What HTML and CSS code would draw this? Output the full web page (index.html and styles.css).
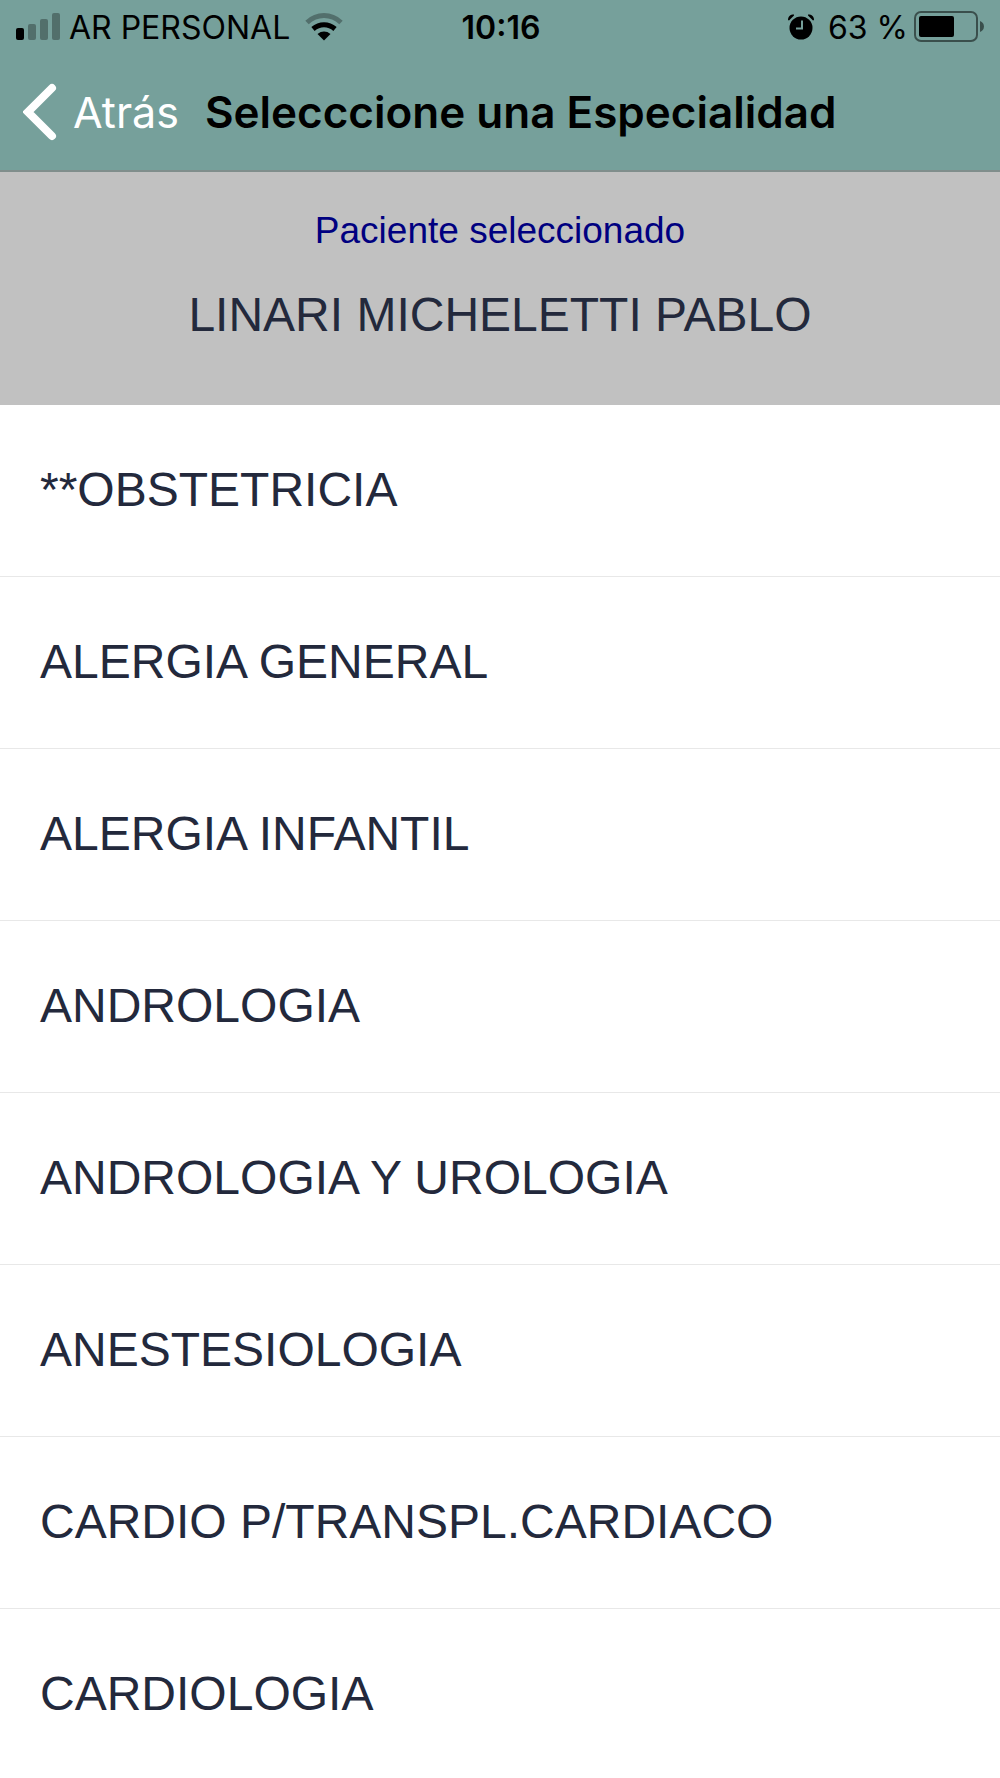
FILE: index.html
```html
<!DOCTYPE html>
<html lang="es">
<head>
    <meta charset="UTF-8">
    <meta name="viewport" content="width=device-width, initial-scale=1.0">
    <title>Seleccione una Especialidad</title>
    <link rel="stylesheet" href="styles.css">
</head>
<body>
    <header class="header">
        <div class="status-bar">
            <div class="status-left">
                <svg class="signal" width="44" height="28" viewBox="0 0 44 28" aria-hidden="true">
                    <rect x="0" y="15" width="8" height="12" rx="2"/>
                    <g opacity="0.3">
                        <rect x="12" y="11" width="8" height="16" rx="2"/>
                        <rect x="24" y="6" width="8" height="21" rx="2"/>
                        <rect x="36" y="0" width="8" height="27" rx="2"/>
                    </g>
                </svg>
                <span>AR PERSONAL</span>
                <svg class="wifi" width="38" height="28" viewBox="0 0 38 28" aria-hidden="true">
                    <g fill="none" stroke="#000" stroke-width="5">
                        <path d="M2 9.500C12 .3 26 .3 36 9.500" opacity="0.3"/>
                        <path d="M8 16C14.500 10.300 23.500 10.300 30 16"/>
                    </g>
                    <path d="M12.500 21C16.500 17.700 21.500 17.700 25.500 21L19 27.500Z"/>
                </svg>
            </div>
            <span class="time">10:16</span>
            <div class="status-right">
                <svg class="alarm" width="26" height="26" viewBox="0 0 26 26" aria-hidden="true">
                    <circle cx="13" cy="14" r="11.500"/>
                    <path d="M0 6C0 2.500 2 .5 6 .5L6 1.500L1 6.500ZM26 6C26 2.500 24 .5 20 .5L20 1.500L25 6.500Z"/>
                    <path d="M14 6.500V14.500H8" fill="none" stroke="#76a09b" stroke-width="2"/>
                </svg>
                <span>63 %</span>
                <svg class="battery" width="72" height="32" viewBox="0 0 72 32" aria-hidden="true">
                    <g opacity="0.5">
                        <rect x="1" y="1" width="62" height="29" rx="6" fill="none" stroke="#000" stroke-width="2"/>
                        <path d="M66 10C71.300 12 71.300 19 66 21Z"/>
                    </g>
                    <rect x="5" y="5" width="35" height="21" rx="2"/>
                </svg>
            </div>
        </div>
        <nav class="nav-bar">
            <button class="back-button" type="button">
                <svg width="34" height="58" viewBox="0 0 34 58" aria-hidden="true">
                    <path d="M29 5L5 29L29 53" fill="none" stroke="#fff" stroke-width="8" stroke-linecap="round" stroke-linejoin="miter"/>
                </svg>
                Atrás
            </button>
            <h1 class="title">Selecccione una Especialidad</h1>
        </nav>
    </header>

    <section class="patient">
        <p class="patient-label">Paciente seleccionado</p>
        <p class="patient-name">LINARI MICHELETTI PABLO</p>
    </section>

    <ul class="list">
        <li><a class="item" href="#">**OBSTETRICIA</a></li>
        <li><a class="item" href="#">ALERGIA GENERAL</a></li>
        <li><a class="item" href="#">ALERGIA INFANTIL</a></li>
        <li><a class="item" href="#">ANDROLOGIA</a></li>
        <li><a class="item" href="#">ANDROLOGIA Y UROLOGIA</a></li>
        <li><a class="item" href="#">ANESTESIOLOGIA</a></li>
        <li><a class="item" href="#">CARDIO P/TRANSPL.CARDIACO</a></li>
        <li><a class="item" href="#">CARDIOLOGIA</a></li>
    </ul>
</body>
</html>
```
FILE: styles.css
```css
* {
    box-sizing: border-box;
}

body {
    margin: 0;
    background-color: #fff;
    color: #23293c;
    font-family: "Liberation Sans", Arial, sans-serif;
}

/* Header */
.header {
    background-color: #76a09b;
    border-bottom: 2px solid #808e8c;
    color: #000;
    font-family: Inter, sans-serif;
}

.status-bar {
    display: grid;
    grid-template-columns: 1fr auto 1fr;
    align-items: center;
    height: 54px;
    padding: 0 14px 0 16px;
    font-size: 32px;
}

.status-left,
.status-right {
    display: flex;
    align-items: center;
}

.status-left {
    gap: 9px;
}

.status-right {
    justify-content: flex-end;
    gap: 6px;
}

.wifi {
    margin-left: 6px;
}

.alarm {
    margin-right: 8px;
}

.time {
    font-weight: 600;
}

.nav-bar {
    display: flex;
    align-items: center;
    gap: 26px;
    height: 116px;
    padding: 0 23px;
}

.back-button {
    display: flex;
    align-items: center;
    gap: 16px;
    padding: 0;
    border: none;
    background: none;
    color: #fff;
    font-family: inherit;
    font-size: 43px;
    cursor: pointer;
}

.title {
    margin: 0;
    font-size: 44px;
    font-weight: 600;
    white-space: nowrap;
}

/* Selected patient */
.patient {
    padding: 33px 20px 60px;
    background-color: #c1c1c1;
    text-align: center;
}

.patient-label {
    margin: 0 0 28px;
    color: #000080;
    font-size: 37px;
    line-height: 52px;
}

.patient-name {
    margin: 0;
    font-size: 48px;
    line-height: 60px;
}

/* Specialties */
.list {
    margin: 0;
    padding: 0;
    list-style: none;
}

.item {
    display: block;
    padding: 55px 40px 56px;
    border-bottom: 1px solid #e8e8e8;
    color: inherit;
    font-size: 48px;
    line-height: 60px;
    text-decoration: none;
}

.item:active {
    background-color: #eee;
}

li:last-child .item {
    border-bottom: none;
}
```
